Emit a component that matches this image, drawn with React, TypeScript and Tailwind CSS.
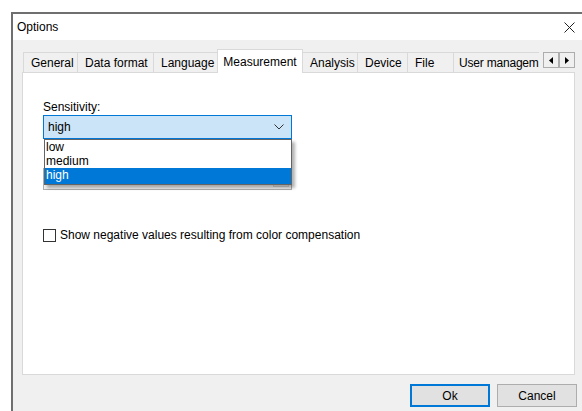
import React from "react";

const tabs = [
  { label: "General", w: "w-[54px]" },
  { label: "Data format", w: "w-[76px]" },
  { label: "Language", w: "w-[65px]" },
  { label: "Measurement", w: "w-[86px]", active: true },
  { label: "Analysis", w: "w-[55px]" },
  { label: "Device", w: "w-[50px]" },
  { label: "File", w: "w-[46px]" },
];

const options = ["low", "medium", "high"];

function Chevron() {
  return (
    <svg width="10" height="6" viewBox="0 0 10 6" className="block">
      <path d="M0.5 0.5 L5 5 L9.5 0.5" fill="none" stroke="#333" strokeWidth="1" />
    </svg>
  );
}

function ScrollArrow({ dir }: { dir: "left" | "right" }) {
  return (
    <div className="flex h-[16px] w-[16px] items-center justify-center border border-[#adadad] bg-[#f0f0f0]">
      <svg width="4" height="7" viewBox="0 0 4 7">
        {dir === "left" ? <path d="M4 0 L0 3.5 L4 7 Z" fill="#000" /> : <path d="M0 0 L4 3.5 L0 7 Z" fill="#000" />}
      </svg>
    </div>
  );
}

export default function App() {
  return (
    <div
      className="h-[411px] w-[582px] overflow-hidden bg-white pl-[11px] pt-[12px] text-[12px] leading-[14px] text-black"
      style={{ fontFamily: '"Liberation Sans", Arial, sans-serif' }}
    >
      <div className="flex h-[410px] w-[571px] flex-col border-l-2 border-t-2 border-[#6f6f6f]">
        {/* title bar */}
        <div className="flex h-[26px] shrink-0 items-center justify-between bg-white pl-[4px] pr-[7px]">
          <span className="text-[12px]">Options</span>
          <svg width="11" height="11" viewBox="0 0 11 11">
            <path d="M0.5 0.5 L10.5 10.5 M10.5 0.5 L0.5 10.5" stroke="#222" strokeWidth="1" />
          </svg>
        </div>

        <div className="flex flex-1 flex-col bg-[#f0f0f0] pl-[9px] pr-[7px] pt-[9px]">
          {/* tab strip */}
          <div className="relative z-10 flex h-[23px] items-start pl-px">
            {tabs.map((t) =>
              t.active ? (
                <div
                  key={t.label}
                  className={`${t.w} -mx-px flex h-[24px] shrink-0 items-center justify-center border border-b-0 border-[#d9d9d9] bg-white`}
                >
                  {t.label}
                </div>
              ) : (
                <div
                  key={t.label}
                  className={`${t.w} mt-[3px] flex h-[20px] shrink-0 items-center whitespace-nowrap border border-b-0 border-r-0 border-[#d9d9d9] bg-[#f0f0f0] pl-[7px]`}
                >
                  {t.label}
                </div>
              )
            )}
            <div className="mt-[3px] flex h-[20px] shrink-0 items-center whitespace-nowrap border border-b-0 border-r-0 border-[#d9d9d9] bg-[#f0f0f0] pl-[5px] tracking-[-0.2px]">
              User managem
            </div>
            <div className="ml-auto mt-[3px] flex">
              <ScrollArrow dir="left" />
              <ScrollArrow dir="right" />
            </div>
          </div>

          {/* tab page */}
          <div className="h-[303px] w-[553px] border border-[#d9d9d9] bg-white pl-[20px] pt-[27px]">
            <div className="relative w-[249px]">
              <div className="mb-px">Sensitivity:</div>
              <div className="flex h-[24px] items-center justify-between border border-[#0078d7] bg-[#cce4f7] pl-[4px] pr-[7px]">
                <span>high</span>
                <Chevron />
              </div>

              {/* second combo, mostly covered by the open list */}
              <div className="mt-[29px] flex h-[22px] items-center justify-end border border-[#adadad] bg-[#f0f0f0] pr-[2px]">
                <div className="h-[16px] w-[16px] border border-[#cfcfcf] bg-[#e5e5e5]" />
              </div>

              {/* open dropdown list */}
              <div className="absolute left-px top-[39px] z-20 w-[248px] border border-[#646464] bg-white shadow-[3px_3px_3px_rgba(0,0,0,0.3)]">
                {options.map((o) => (
                  <div
                    key={o}
                    className={`h-[14px] pl-[1px] leading-[14px] ${o === "high" ? "h-[16px] bg-[#0078d7] text-white" : ""}`}
                  >
                    {o}
                  </div>
                ))}
              </div>

              <label className="mt-[38px] flex items-center gap-[4px] whitespace-nowrap">
                <span className="h-[13px] w-[13px] shrink-0 border border-[#333] bg-white" />
                <span>Show negative values resulting from color compensation</span>
              </label>
            </div>
          </div>

          {/* dialog buttons */}
          <div className="mt-[9px] flex justify-end gap-[7px]">
            <button className="h-[23px] w-[80px] border-2 border-[#0078d7] bg-[#e1e1e1]">Ok</button>
            <button className="-mr-[2px] h-[23px] w-[80px] border border-[#adadad] bg-[#e1e1e1]">Cancel</button>
          </div>
        </div>
      </div>
    </div>
  );
}
